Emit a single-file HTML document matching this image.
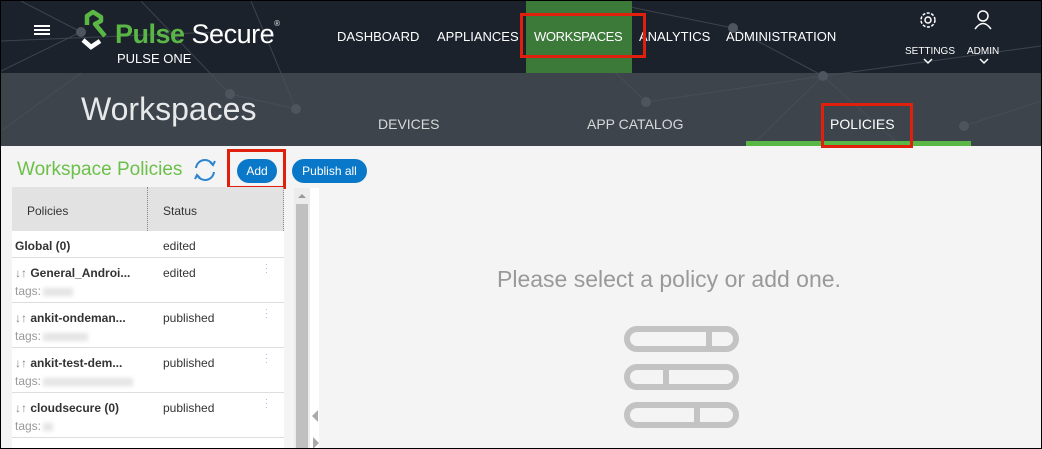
<!DOCTYPE html>
<html><head><meta charset="utf-8"><style>
*{margin:0;padding:0;box-sizing:border-box}
body{width:1042px;height:449px;overflow:hidden;font-family:"Liberation Sans",sans-serif;background:#000;position:relative}
#f{position:absolute;left:1px;top:1px;width:1040px;height:447px;background:#f4f4f4;overflow:hidden}
.top{position:absolute;left:0;top:0;width:1040px;height:72px;background:#1b222c}
.sub{position:absolute;left:0;top:72px;width:1040px;height:73px;background:#3e444c}
.t{position:absolute;color:#fff;white-space:nowrap}
.nav{font-size:13px;top:28px}
.tab{font-size:14px;top:115px;color:#d6d8da}
.red{position:absolute;border:3px solid #e0200c}
.row{position:absolute;left:11px;width:272px;background:#fff;border-bottom:1px solid #ddd;font-size:12px;color:#333}
.row b{position:absolute;left:3px;top:8px;font-size:12px}
.row .s{position:absolute;left:151px;top:8px}
.row .tg{position:absolute;left:3px;top:26px;color:#999}
.row .bl{display:inline-block;height:8px;background:#e4e4e4;filter:blur(2px);margin-left:2px;vertical-align:middle}
.row .d{position:absolute;left:253px;top:5px;color:#7aa6d6;font-size:8px;line-height:4px}
.btn{position:absolute;background:#0a78c8;color:#fff;font-size:12px;border-radius:12px;height:24px;line-height:24px;text-align:center}
</style></head><body><div id="f">
<div class="top"></div>
<div class="sub"></div>
<svg style="position:absolute;left:0;top:0" width="1040" height="145">
<g stroke="#4a525c" stroke-width="1" fill="none" opacity=".7">
<line x1="0" y1="40" x2="240" y2="30"/><line x1="80" y1="31" x2="0" y2="70"/><line x1="80" y1="31" x2="20" y2="0"/>
<line x1="229" y1="93" x2="295" y2="108"/><line x1="229" y1="93" x2="140" y2="0"/><line x1="295" y1="108" x2="250" y2="0"/>
<line x1="645" y1="101" x2="822" y2="75"/><line x1="822" y1="75" x2="1040" y2="45"/><line x1="732" y1="27" x2="822" y2="75"/>
<line x1="732" y1="27" x2="600" y2="0"/><line x1="822" y1="75" x2="900" y2="145"/><line x1="645" y1="101" x2="540" y2="0"/>
<line x1="0" y1="130" x2="80" y2="72"/><line x1="963" y1="125" x2="1040" y2="100"/><line x1="822" y1="75" x2="750" y2="145"/>
</g>
<g fill="#4d555e"><circle cx="80" cy="31" r="5"/><circle cx="229" cy="93" r="5"/><circle cx="295" cy="108" r="5"/><circle cx="645" cy="101" r="5"/><circle cx="822" cy="75" r="5"/><circle cx="732" cy="27" r="5"/><circle cx="963" cy="125" r="5"/></g>
<rect x="525" y="0" width="106" height="72" fill="#3c7a3a"/>
<g fill="#fff"><rect x="33" y="24" width="16" height="2"/><rect x="33" y="28" width="16" height="2"/><rect x="33" y="32" width="16" height="2"/></g>
<path d="M86,24 L86,15 L92,11 L100,16 L100,20 L94,23 L104,35" stroke="#5ab645" stroke-width="4.5" fill="none" stroke-linejoin="round"/>
<path d="M82,39 L90,46 L99,40" stroke="#fff" stroke-width="4.5" fill="none"/>
<g stroke="#fff" stroke-width="1.5" fill="none">
<circle cx="927" cy="19" r="3"/><circle cx="927" cy="19" r="7" stroke-dasharray="3 1.5"/>
<circle cx="982" cy="15" r="5"/><path d="M974,28 Q982,17 990,28"/>
<path d="M923,58 L927,62 L931,58"/><path d="M979,58 L983,62 L987,58"/>
</g>
<rect x="745" y="140" width="225" height="5" fill="#5ab645"/>
</svg>
<div class="t" style="left:114px;top:18px;font-size:27px;font-weight:bold;color:#5ab645;letter-spacing:-0.5px">Pulse<span style="color:#fff;font-weight:normal"> Secure</span><span style="font-size:8px;vertical-align:top;color:#ccc">®</span></div>
<div class="t" style="left:116px;top:50px;font-size:13px">PULSE ONE</div>
<div class="t nav" style="left:336px">DASHBOARD</div>
<div class="t nav" style="left:436px">APPLIANCES</div>
<div class="t nav" style="left:533px;letter-spacing:-0.4px">WORKSPACES</div>
<div class="t nav" style="left:638px">ANALYTICS</div>
<div class="t nav" style="left:725px">ADMINISTRATION</div>
<div class="t" style="left:904px;top:45px;font-size:10px">SETTINGS</div>
<div class="t" style="left:966px;top:45px;font-size:10px">ADMIN</div>
<div class="red" style="left:519px;top:12px;width:126px;height:45px"></div>
<div class="t" style="left:80px;top:90px;font-size:32px;color:#e6e8ea">Workspaces</div>
<div class="t tab" style="left:377px">DEVICES</div>
<div class="t tab" style="left:586px">APP CATALOG</div>
<div class="t tab" style="left:829px;color:#fff">POLICIES</div>
<div class="red" style="left:820px;top:102px;width:92px;height:45px"></div>
<div class="t" style="left:16px;top:158px;font-size:19px;color:#6cc04a">Workspace Policies</div>
<svg style="position:absolute;left:191px;top:156px" width="26" height="26"><g stroke="#2e86d0" stroke-width="2" fill="none"><path d="M4,11 A9,9 0 0 1 21,8"/><path d="M22,15 A9,9 0 0 1 5,18"/><path d="M18,5 L21,8 L23,4"/><path d="M8,21 L5,18 L3,22"/></g></svg>
<div class="btn" style="left:236px;top:158px;width:40px">Add</div>
<div class="red" style="left:226px;top:148px;width:59px;height:40px"></div>
<div class="btn" style="left:291px;top:158px;width:75px">Publish all</div>
<div style="position:absolute;left:11px;top:186px;width:272px;height:44px;background:#e2e2e2;font-size:12px;color:#333">
<span style="position:absolute;left:15px;top:17px">Policies</span>
<span style="position:absolute;left:151px;top:17px">Status</span>
<div style="position:absolute;left:135px;top:0;height:44px;border-left:1px dotted #888"></div>
<div style="position:absolute;left:271px;top:0;height:44px;border-left:1px dotted #888"></div></div>
<div class="row" style="top:230px;height:27px"><b>Global (0)</b><span class="s">edited</span></div>
<div class="row" style="top:257px;height:45px"><b><span style="font-weight:normal;color:#888">↓↑</span> General_Androi...</b><span class="s">edited</span><span class="tg">tags:<span class="bl" style="width:30px"></span></span><span class="d">·<br>·<br>·</span></div>
<div class="row" style="top:302px;height:45px"><b><span style="font-weight:normal;color:#888">↓↑</span> ankit-ondeman...</b><span class="s">published</span><span class="tg">tags:<span class="bl" style="width:45px"></span></span><span class="d">·<br>·<br>·</span></div>
<div class="row" style="top:347px;height:45px"><b><span style="font-weight:normal;color:#888">↓↑</span> ankit-test-dem...</b><span class="s">published</span><span class="tg">tags:<span class="bl" style="width:90px"></span></span><span class="d">·<br>·<br>·</span></div>
<div class="row" style="top:392px;height:45px"><b><span style="font-weight:normal;color:#888">↓↑</span> cloudsecure (0)</b><span class="s">published</span><span class="tg">tags:<span class="bl" style="width:10px"></span></span><span class="d">·<br>·<br>·</span></div>
<div class="row" style="top:437px;height:20px"></div>
<div style="position:absolute;left:293px;top:187px;width:16px;height:262px;background:#ececec"></div>
<div style="position:absolute;left:295px;top:203px;width:12px;height:250px;background:#c0c0c0"></div>
<div style="position:absolute;left:297px;top:193px;border:4px solid transparent;border-bottom:4px solid #999;border-top:0"></div>
<div style="position:absolute;left:309px;top:187px;width:9px;height:262px;background:#fff"></div>
<div style="position:absolute;left:311px;top:409px;border:6px solid transparent;border-right:6px solid #aaa;border-left:0"></div>
<div style="position:absolute;left:312px;top:436px;border:6px solid transparent;border-left:6px solid #aaa;border-right:0"></div>
<div class="t" style="left:496px;top:265px;font-size:23px;color:#999">Please select a policy or add one.</div>
<svg style="position:absolute;left:620px;top:322px" width="122" height="108"><g stroke="#c3c3c3" stroke-width="6" fill="none">
<rect x="6" y="6" width="109" height="20" rx="10"/><line x1="88" y1="6" x2="88" y2="26"/>
<rect x="6" y="44" width="109" height="20" rx="10"/><line x1="45" y1="44" x2="45" y2="64"/>
<rect x="6" y="82" width="109" height="20" rx="10"/><line x1="76" y1="82" x2="76" y2="102"/></g></svg>
</div></body></html>
